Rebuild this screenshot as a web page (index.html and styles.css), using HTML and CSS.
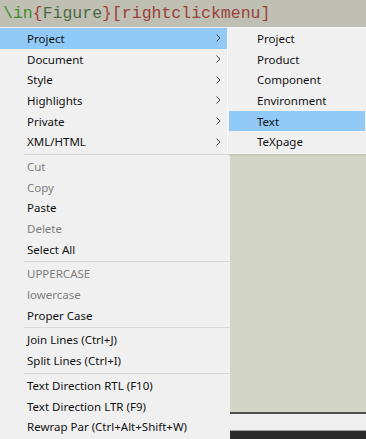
FILE: index.html
```html
<!DOCTYPE html>
<html lang="en">

<head>
    <meta charset="UTF-8">
    <meta name="viewport" content="width=device-width, initial-scale=1.0">
    <title>Right click menu</title>
    <link rel="stylesheet" href="styles.css">
</head>

<body>
    <div class="screen">
        <div class="code">
            <span class="cmd">\in</span><span class="brace">{</span><span class="arg">Figure</span><span class="brace">}</span><span class="opt">[rightclickmenu]</span>
        </div>

        <div class="area">
            <div class="menu">
                <div class="item active">Project<svg class="arrow" width="5" height="8" viewBox="0 0 5 8"><polyline points="0.5,0.5 4,4 0.5,7.5" /></svg></div>
                <div class="item">Document<svg class="arrow" width="5" height="8" viewBox="0 0 5 8"><polyline points="0.5,0.5 4,4 0.5,7.5" /></svg></div>
                <div class="item">Style<svg class="arrow" width="5" height="8" viewBox="0 0 5 8"><polyline points="0.5,0.5 4,4 0.5,7.5" /></svg></div>
                <div class="item">Highlights<svg class="arrow" width="5" height="8" viewBox="0 0 5 8"><polyline points="0.5,0.5 4,4 0.5,7.5" /></svg></div>
                <div class="item">Private<svg class="arrow" width="5" height="8" viewBox="0 0 5 8"><polyline points="0.5,0.5 4,4 0.5,7.5" /></svg></div>
                <div class="item">XML/HTML<svg class="arrow" width="5" height="8" viewBox="0 0 5 8"><polyline points="0.5,0.5 4,4 0.5,7.5" /></svg></div>
                <div class="sep"></div>
                <div class="item disabled">Cut</div>
                <div class="item disabled">Copy</div>
                <div class="item">Paste</div>
                <div class="item disabled">Delete</div>
                <div class="item">Select All</div>
                <div class="sep"></div>
                <div class="item disabled">UPPERCASE</div>
                <div class="item disabled">lowercase</div>
                <div class="item">Proper Case</div>
                <div class="sep"></div>
                <div class="item">Join Lines (Ctrl+J)</div>
                <div class="item">Split Lines (Ctrl+I)</div>
                <div class="sep"></div>
                <div class="item">Text Direction RTL (F10)</div>
                <div class="item">Text Direction LTR (F9)</div>
                <div class="item">Rewrap Par (Ctrl+Alt+Shift+W)</div>
            </div>

            <div class="editor">
                <div class="page"></div>
                <div class="status"></div>
                <div class="taskbar"></div>
            </div>

            <div class="submenu">
                <div class="item">Project</div>
                <div class="item">Product</div>
                <div class="item">Component</div>
                <div class="item">Environment</div>
                <div class="item active">Text</div>
                <div class="item">TeXpage</div>
            </div>
        </div>
    </div>
</body>

</html>
```

FILE: styles.css
```css
body {
    margin: 0;
    background: #d4d6c5;
}

.screen {
    width: 366px;
    height: 439px;
    overflow: hidden;
    display: flex;
    flex-direction: column;
}

.code {
    height: 27px;
    background-color: #bfc0b3;
    font-family: "Liberation Mono", monospace;
    font-size: 16.5px;
    line-height: 27px;
    padding-left: 3px;
    white-space: nowrap;
}

.cmd {
    color: #3f8a2c;
}

.brace {
    color: #a8403a;
}

.arg {
    color: #4b6a48;
}

.opt {
    color: #9a3f3a;
}

.area {
    flex: 1;
    display: flex;
    position: relative;
}

.menu {
    width: 230px;
    padding-top: 1px;
    background-color: #f0f0f0;
    font-family: "Noto Sans", sans-serif;
    font-size: 11.5px;
    color: #111;
}

.item {
    height: 20.7px;
    display: flex;
    align-items: center;
    justify-content: space-between;
    padding: 0 9px 0 27px;
    white-space: nowrap;
}

.menu .item.active {
    background-color: #91c9f7;
    margin-right: 3px;
    padding-right: 6px;
}

.item.disabled {
    color: #7d7d7d;
}

.arrow polyline {
    fill: none;
    stroke: #444;
    stroke-width: 1;
}

.sep {
    height: 1px;
    margin: 1.5px 0 1.5px 24px;
    background-color: #d9d9d9;
}

.editor {
    flex: 1;
    display: flex;
    flex-direction: column;
}

.page {
    flex: 1;
    background-color: #d4d6c5;
    border-bottom: 2px solid #4d4d4d;
}

.status {
    height: 16px;
    background-color: #f0f0f0;
    border-bottom: 1px solid #a0a0a0;
}

.taskbar {
    height: 8px;
    background-color: #2b2b2b;
}

.submenu {
    position: absolute;
    left: 227px;
    top: 0;
    width: 136px;
    padding: 0 1px 1px 1px;
    border: 1px solid #fafafa;
    background-color: #f0f0f0;
    box-shadow: 1px 1px 2px rgba(0, 0, 0, 0.15);
    font-family: "Noto Sans", sans-serif;
    font-size: 11.5px;
    color: #111;
}

.submenu .item {
    padding-left: 28px;
}

.submenu .item.active {
    background-color: #91c9f7;
}
```
